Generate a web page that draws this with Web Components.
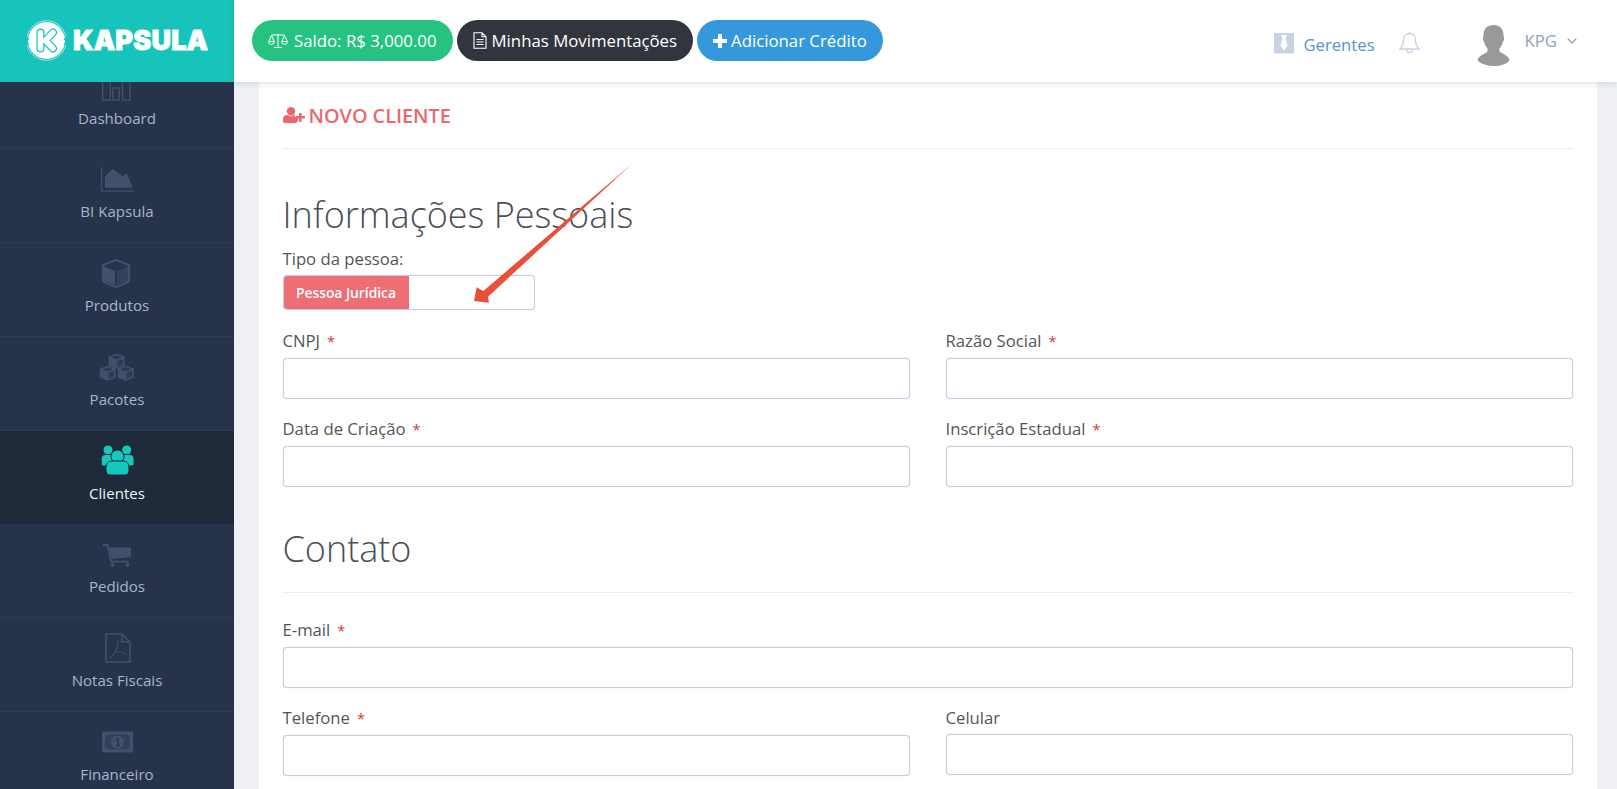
<!DOCTYPE html>
<html lang="pt-BR">
<head>
<meta charset="utf-8">
<title>Kapsula - Novo Cliente</title>
<style>
	html, body{margin: 0; height: 100%; overflow: hidden; font-family: "Open Sans", sans-serif; background: #eef0f6}
</style>
</head>
<body>
<kp-app>
	<kp-sidebar slot="sidebar">
		<kp-nav-item icon="chart" label="Dashboard"></kp-nav-item>
		<kp-nav-item icon="area" label="BI Kapsula"></kp-nav-item>
		<kp-nav-item icon="cube" label="Produtos"></kp-nav-item>
		<kp-nav-item icon="cubes" label="Pacotes"></kp-nav-item>
		<kp-nav-item icon="users" label="Clientes" active></kp-nav-item>
		<kp-nav-item icon="cart" label="Pedidos"></kp-nav-item>
		<kp-nav-item icon="pdf" label="Notas Fiscais"></kp-nav-item>
		<kp-nav-item icon="money" label="Financeiro"></kp-nav-item>
	</kp-sidebar>
	<kp-header slot="header">
		<kp-pill color="#26c281" icon="scale" gap="6">Saldo: R$ 3,000.00</kp-pill>
		<kp-pill color="#32353d" icon="file" gap="5">Minhas Movimentações</kp-pill>
		<kp-pill color="#3598dc" icon="plus" gap="4">Adicionar Crédito</kp-pill>
	</kp-header>
	<kp-card>
		<kp-card-title>NOVO CLIENTE</kp-card-title>
		<kp-heading>Informações Pessoais</kp-heading>
		<kp-toggle label="Tipo da pessoa:" value="Pessoa Jurídica"></kp-toggle>
		<kp-form-row>
			<kp-field label="CNPJ" required></kp-field>
			<kp-field label="Razão Social" required></kp-field>
			<kp-field label="Data de Criação" required></kp-field>
			<kp-field label="Inscrição Estadual" required></kp-field>
		</kp-form-row>
		<kp-heading ruled>Contato</kp-heading>
		<kp-form-row>
			<kp-field label="E-mail" required wide></kp-field>
			<kp-field label="Telefone" required></kp-field>
			<kp-field label="Celular"></kp-field>
		</kp-form-row>
	</kp-card>
	<kp-arrow slot="overlay"></kp-arrow>
</kp-app>

<script>
const ICONS = {
	chart: `<g fill="none" stroke="currentColor" stroke-width="1.4"><rect x="3.7" y="6" width="7.5" height="26"/><rect x="13.7" y="20" width="6.5" height="12"/><rect x="23.5" y="2" width="7.5" height="30"/></g>`,
	area: `<path d="M2.6 6V30.2H35" fill="none" stroke="currentColor" stroke-width="1.3"/><path d="M6 26.7V15.4L14 7.7 23.7 15.4 27.7 11.7 33.7 26.7z" fill="currentColor"/>`,
	cube: `<path d="M17 5 30 10V26.5L17 32 4 26.5V10z" fill="none" stroke="currentColor" stroke-width="2.2" stroke-linejoin="round"/><path d="M5 11.5 16 16V30L5 25.5z" fill="currentColor"/><path d="M18 16 29 11.5V25.5L18 30z" fill="currentColor" opacity=".55"/>`,
	cubes: `<g fill="currentColor"><path d="M17.5 4.4 25.5 7.4V16.5L17.5 20 9.5 16.5V7.4z"/><path d="M8.7 16.4 16.7 19.4V28.5L8.7 32 .7 28.5V19.4z"/><path d="M26.7 16.4 34.7 19.4V28.5L26.7 32 18.7 28.5V19.4z"/></g><g fill="#27334b" opacity=".75"><path d="M17.5 6.2 23 8.3 17.5 10.4 12 8.3z"/><path d="M8.7 18.2 14.2 20.3 8.7 22.4 3.2 20.3z"/><path d="M26.7 18.2 32.2 20.3 26.7 22.4 21.2 20.3z"/><path d="M18.3 12 23.8 9.9V15.6L18.3 18z"/><path d="M9.5 24 15 21.9V27.6L9.5 30z"/><path d="M27.5 24 33 21.9V27.6L27.5 30z"/></g>`,
	users: `<g fill="currentColor" stroke="#1f2a3a" stroke-width="1"><circle cx="9" cy="7" r="5"/><circle cx="27.7" cy="7" r="5"/><path d="M2.2 21V15.5a4 4 0 0 1 4-4h7a4 4 0 0 1 4 4V21a2 2 0 0 1-2 2H4.2a2 2 0 0 1-2-2z"/><path d="M19.5 21V15.5a4 4 0 0 1 4-4H31a4 4 0 0 1 4 4V21a2 2 0 0 1-2 2H21.5a2 2 0 0 1-2-2z"/><circle cx="18.5" cy="13.5" r="6.5"/><path d="M7 28V25c0-4.5 2.5-7 6-7h11c3.5 0 6 2.5 6 7v3a4 4 0 0 1-4 4H11a4 4 0 0 1-4-4z"/></g>`,
	cart: `<path d="M4 9H8.5L12 25.7H30" fill="none" stroke="currentColor" stroke-width="1.8"/><path d="M10 11.5H32V21L12.5 23z" fill="currentColor"/><circle cx="13.5" cy="29" r="2" fill="currentColor"/><circle cx="28.5" cy="29" r="2" fill="currentColor"/>`,
	pdf: `<path d="M7 4H23L31 12V32H7zM23 4V12H31" fill="none" stroke="currentColor" stroke-width="1.6"/><path d="M19 10.5C19 17 17 24 10.5 28M16 21C20 21.5 24 22.5 28 24.5" fill="none" stroke="currentColor" stroke-width="1.2"/>`,
	money: `<rect x="3" y="7.5" width="31" height="21" fill="currentColor"/><path d="M9 10.5H28L31 13.5V22.5L28 25.5H9L6 22.5V13.5z" fill="#27334b" opacity=".55"/><circle cx="18.5" cy="18" r="6.5" fill="currentColor"/><path d="M17 15.5 19 14.5V21.5M17 21.5H21" fill="none" stroke="#27334b" stroke-width="1.3"/>`,
}

const PILL_ICONS = {
	scale: `<svg width="20" height="17" viewBox="0 0 20 17" fill="none" stroke="#fff" stroke-width="1"><path d="M10 1.5V15M6 15.5H14M3.5 3H16.5M3.5 3.5 .8 9.5H6.2zM16.5 3.5 13.8 9.5H19.2zM.6 9.5a2.9 2.9 0 0 0 5.8 0M13.6 9.5a2.9 2.9 0 0 0 5.8 0"/></svg>`,
	file: `<svg width="14" height="17" viewBox="0 0 14 17" fill="none" stroke="#fff" stroke-width="1.1"><path d="M1 .8H9L13 4.8V16.2H1zM9 .8V4.8H13M3.5 7.5H10.5M3.5 10H10.5M3.5 12.5H10.5"/></svg>`,
	plus: `<svg width="14" height="14" viewBox="0 0 14 14" fill="#fff"><path d="M5 0H9V5H14V9H9V14H5V9H0V5H5z"/></svg>`,
}

class KpApp extends HTMLElement{
	constructor(){
		super()
		this.attachShadow({mode: "open"}).innerHTML = `
			<style>
				:host{display: grid; grid-template-columns: 234px 1fr; grid-template-rows: 81.7px 1fr; grid-template-areas: "side head" "side main"; height: 789px; overflow: hidden; position: relative}
				.side{grid-area: side; min-height: 0; overflow: hidden}
				.head{grid-area: head; position: relative; z-index: 2}
				main{grid-area: main; padding: 0 20.5px 0 24.5px; min-height: 0; overflow: hidden; background: #eef0f6}
			</style>
			<div class="side"><slot name="sidebar"></slot></div>
			<div class="head"><slot name="header"></slot></div>
			<main><slot></slot></main>
			<slot name="overlay"></slot>
		`
	}
}
customElements.define("kp-app", KpApp)

class KpSidebar extends HTMLElement{
	constructor(){
		super()
		this.attachShadow({mode: "open"}).innerHTML = `
			<style>
				:host{display: flex; flex-direction: column; height: 100%; background: #27334b}
				.logo{flex: none; height: 81.7px; background: #17c4bb; display: flex; align-items: center; padding-left: 26px; gap: 6px; position: relative; z-index: 1; box-sizing: border-box}
				.brand{color: #fff; font: 900 27px/1 Inter, sans-serif; letter-spacing: .2px; -webkit-text-stroke: .8px #fff}
				.menu{margin-top: -25.9px}
			</style>
			<div class="logo">
				<svg width="41" height="41" viewBox="0 0 41 41">
					<circle cx="20.5" cy="20.5" r="18.5" fill="#fff"/>
					<circle cx="20.5" cy="20.5" r="19.8" fill="none" stroke="#fff" stroke-width=".8" opacity=".7"/>
					<path d="M0 16 3.5 19 1 21 3 24 0 26zM41 16 37.5 19 40 21 38 24 41 26z" fill="#17c4bb"/>
					<g fill="none" stroke-linecap="round" stroke-linejoin="round">
						<path d="M14.5 12.5V28.5M27 12.5 19.5 20.5 27 28.5" stroke="#17c4bb" stroke-width="8"/>
						<path d="M14.5 12.5V28.5M27 12.5 19.5 20.5 27 28.5" stroke="#fff" stroke-width="5.5"/>
					</g>
				</svg>
				<span class="brand">KAPSULA</span>
			</div>
			<div class="menu"><slot></slot></div>
		`
	}
}
customElements.define("kp-sidebar", KpSidebar)

class KpNavItem extends HTMLElement{
	constructor(){
		super()
		let active = this.hasAttribute("active")
		this.attachShadow({mode: "open"}).innerHTML = `
			<style>
				:host{display: block; box-sizing: border-box; height: 93.7px; padding-top: 12px; text-align: center; border-bottom: 1px solid #2d3a54; color: #a7b4cb; background: transparent}
				:host([active]){background: #1f2a3a; color: #eef2f6; border-bottom-color: #1f2a3a}
				svg{display: block; margin: 0 auto; color: ${active ? "#17c9bd" : "#434f6c"}}
				span{display: block; margin-top: 6px; font-size: 15.1px; line-height: 21px}
			</style>
			<svg width="36" height="34" viewBox="0 0 36 34">${ICONS[this.getAttribute("icon")]}</svg>
			<span>${this.getAttribute("label")}</span>
		`
	}
}
customElements.define("kp-nav-item", KpNavItem)

class KpHeader extends HTMLElement{
	constructor(){
		super()
		this.attachShadow({mode: "open"}).innerHTML = `
			<style>
				:host{display: flex; align-items: center; height: 81.7px; background: #fff; box-shadow: 0 1px 6px rgba(60,70,90,.18); padding: 0 40px 0 18px; box-sizing: border-box; gap: 4px}
				.right{margin-left: auto; display: flex; align-items: center; color: #5b93c7}
				.tie{margin-top: 5px}
				.ger{font-size: 16.7px; margin: 7px 0 0 9px}
				.bell{margin: 4px 0 0 24px}
				.avatar{margin: 10px 0 0 57px}
				.kpg{font-size: 16.7px; color: #8ea3bb; margin: 0 0 0 15px}
				.chev{margin: 0 0 0 10px}
			</style>
			<slot></slot>
			<div class="right">
				<svg class="tie" width="20" height="21" viewBox="0 0 20 21"><rect width="20" height="20.5" fill="#c5d3e3"/><path d="M7 2H13L11.7 5.5 13.5 13 10 17.5 6.5 13 8.3 5.5z" fill="#fff"/></svg>
				<span class="ger">Gerentes</span>
				<svg class="bell" width="21" height="24" viewBox="0 0 21 24" fill="none" stroke="#c6d2e2" stroke-width="1.3"><path d="M10.5 2.5c4 0 6 3 6 6.5 0 5 1.5 7 3.5 9H1c2-2 3.5-4 3.5-9 0-3.5 2-6.5 6-6.5zM10.5 1v1.5M7.5 18.5a3 3 0 0 0 6 0"/></svg>
				<svg class="avatar" width="33" height="41" viewBox="0 0 32 41" fill="#999"><path d="M16 0c6 0 10 3.5 10 10 0 1 .4 2 .6 3 .2 1.5-.4 3-1.2 3.5-.5 3-2 5.5-3.4 7v3c3 2.5 9 4 10 8.5 0 0-2.5 6-15.5 6S0 35 0 35c1-4.5 7.5-6 10-8.5v-3c-1.4-1.5-2.9-4-3.4-7-.8-.5-1.4-2-1.2-3.5.2-1 .6-2 .6-3C6 3.5 10 0 16 0z"/></svg>
				<span class="kpg">KPG</span>
				<svg class="chev" width="10" height="6" viewBox="0 0 10 6" fill="none" stroke="#8ea3bb" stroke-width="1.3"><path d="M.8 .8 5 5 9.2 .8"/></svg>
			</div>
		`
	}
}
customElements.define("kp-header", KpHeader)

class KpPill extends HTMLElement{
	constructor(){
		super()
		this.attachShadow({mode: "open"}).innerHTML = `
			<style>
				:host{display: inline-flex; align-items: center; height: 41px; box-sizing: border-box; padding: 0 16px; border-radius: 20.5px; color: #fff; font-size: 16.8px; white-space: nowrap; gap: ${this.getAttribute("gap")}px; background: ${this.getAttribute("color")}}
				svg{flex: none}
			</style>
			${PILL_ICONS[this.getAttribute("icon")]}
			<slot></slot>
		`
	}
}
customElements.define("kp-pill", KpPill)

class KpCard extends HTMLElement{
	constructor(){
		super()
		this.attachShadow({mode: "open"}).innerHTML = `
			<style>
				:host{display: block; background: #fff; padding: 0 24px; box-sizing: border-box; height: 100%}
			</style>
			<slot></slot>
		`
	}
}
customElements.define("kp-card", KpCard)

class KpCardTitle extends HTMLElement{
	constructor(){
		super()
		this.attachShadow({mode: "open"}).innerHTML = `
			<style>
				:host{display: flex; align-items: center; gap: 4px; height: 67.3px; padding-top: 1px; box-sizing: border-box; border-bottom: 1px solid #eceef3; color: #e9686d; font-weight: 600; font-size: 19.8px}
			</style>
			<svg width="22" height="16" viewBox="0 0 22 16" fill="currentColor"><circle cx="8" cy="4.2" r="4.2"/><path d="M0 14V12c0-2.5 1.5-4 4-4h1c1 .8 2 1.2 3 1.2S10 8.8 11 8l1 .1V10h3v3.5c-.5 1.5-1.5 2.5-3 2.5H2c-1.5 0-2-1-2-2z"/><path d="M16 6h2.5v3H22v2.5h-3.5V15H16v-3.5h-3V9h3z"/></svg>
			<slot></slot>
		`
	}
}
customElements.define("kp-card-title", KpCardTitle)

class KpHeading extends HTMLElement{
	constructor(){
		super()
		this.attachShadow({mode: "open"}).innerHTML = `
			<style>
				:host{display: block; font-weight: 300; font-size: 36px; line-height: 44px; color: #4a4f57; margin-top: 44px}
				:host([ruled]){margin-top: 21px; height: 65px; border-bottom: 1px solid #eceef3; margin-bottom: 26px}
			</style>
			<slot></slot>
		`
	}
}
customElements.define("kp-heading", KpHeading)

class KpToggle extends HTMLElement{
	constructor(){
		super()
		this.attachShadow({mode: "open"}).innerHTML = `
			<style>
				:host{display: block; margin-top: 11.3px; margin-bottom: 20px; font-size: 16.7px; color: #555}
				label{display: block; line-height: 21px; margin-bottom: 6px}
				.box{display: flex; width: 252px; height: 35px; box-sizing: border-box; border: 1px solid #c5cde0; box-shadow: 0 0 1px #c5cde0; border-radius: 4px; overflow: hidden; background: #fff}
				.on{width: 125px; background: #ee6e76; color: #fff; font-size: 13.8px; font-weight: 600; display: flex; align-items: center; justify-content: center}
			</style>
			<label>${this.getAttribute("label")}</label>
			<div class="box"><div class="on">${this.getAttribute("value")}</div></div>
		`
	}
}
customElements.define("kp-toggle", KpToggle)

class KpFormRow extends HTMLElement{
	constructor(){
		super()
		this.attachShadow({mode: "open"}).innerHTML = `
			<style>
				:host{display: grid; grid-template-columns: 1fr 1fr; column-gap: 36px}
			</style>
			<slot></slot>
		`
	}
}
customElements.define("kp-form-row", KpFormRow)

class KpField extends HTMLElement{
	constructor(){
		super()
		let star = this.hasAttribute("required") ? `<i>*</i>` : ""
		this.attachShadow({mode: "open"}).innerHTML = `
			<style>
				:host{display: block; margin-bottom: 19.5px; font-size: 16.7px; color: #555}
				:host([wide]){grid-column: 1 / -1}
				label{display: block; line-height: 21px; margin-bottom: 6px}
				i{font-style: normal; font-size: 14.5px; color: #e0323e; margin-left: 7px}
				input{display: block; width: 100%; height: 40.5px; box-sizing: border-box; border: 1px solid #c5cde0; box-shadow: 0 0 1px #c5cde0; border-radius: 4px; background: #fff; outline: 0; padding: 0 10px; font: inherit}
			</style>
			<label>${this.getAttribute("label")}${star}</label>
			<input type="text">
		`
	}
}
customElements.define("kp-field", KpField)

// seta vermelha colada por cima do print
class KpArrow extends HTMLElement{
	constructor(){
		super()
		this.attachShadow({mode: "open"}).innerHTML = `
			<style>
				:host{position: absolute; left: 470px; top: 160px; z-index: 3; pointer-events: none}
				svg{display: block}
			</style>
			<svg width="168" height="146" viewBox="470 160 168 146"><defs><linearGradient id="g" x1="633" y1="163" x2="540" y2="245" gradientUnits="userSpaceOnUse"><stop offset="0" stop-color="#e8503a" stop-opacity=".7"/><stop offset=".3" stop-color="#e8503a"/></linearGradient></defs><path d="M474 301 476.7 287.3 483.3 291 633.5 162.5 488 296.7 489 302.7z" fill="url(#g)"/></svg>
		`
	}
}
customElements.define("kp-arrow", KpArrow)
</script>
</body>
</html>
